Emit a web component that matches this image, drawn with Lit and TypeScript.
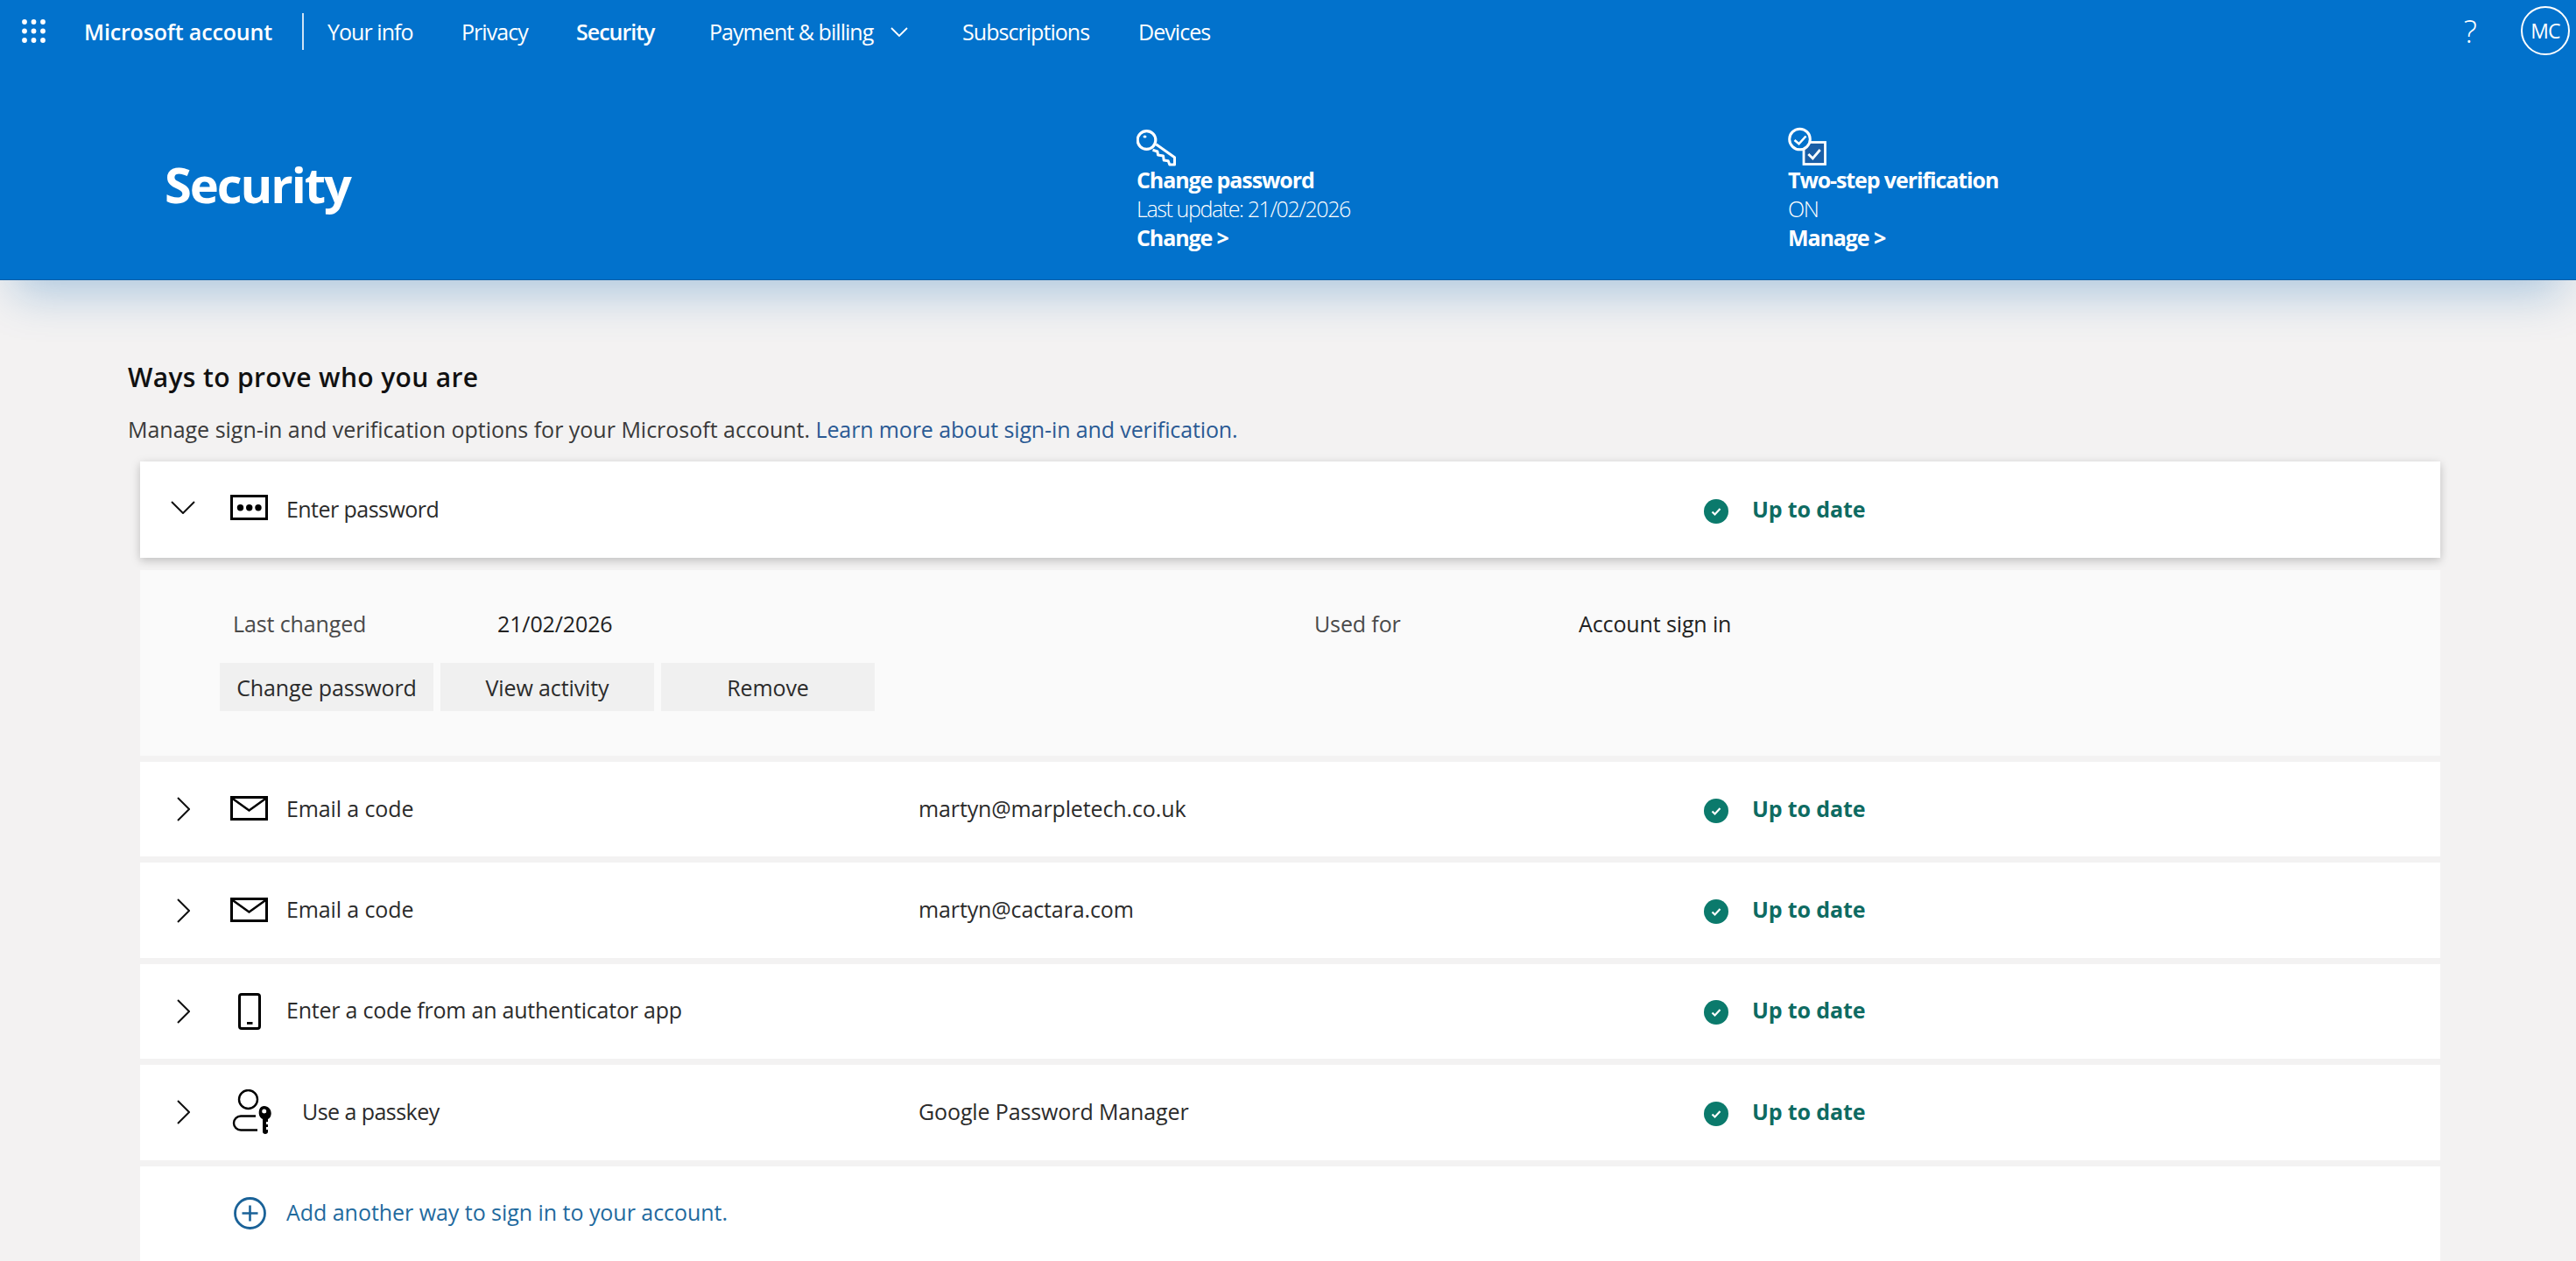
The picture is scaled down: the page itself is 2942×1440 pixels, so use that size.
import {LitElement, html, css, svg} from 'lit';
import {customElement} from 'lit/decorators.js';

const chevronRight = html`<svg class="chev-r" viewBox="0 0 15 28"><path d="M1 1l13 13L1 27" fill="none" stroke="#111" stroke-width="2"/></svg>`;
const chevronDown = html`<svg class="chev-d" viewBox="0 0 28 15"><path d="M1 1l13 13L27 1" fill="none" stroke="#111" stroke-width="2"/></svg>`;

const passwordIcon = html`<svg class="ic-pass" viewBox="0 0 43 29">
  <rect x="1.5" y="1.5" width="40" height="26" fill="none" stroke="#000" stroke-width="3"/>
  <circle cx="11.5" cy="14.7" r="3.7"/><circle cx="21.7" cy="14.7" r="3.7"/><circle cx="32" cy="14.7" r="3.7"/>
</svg>`;
const mailIcon = html`<svg class="ic-mail" viewBox="0 0 43 28">
  <rect x="1.5" y="1.5" width="40" height="25" fill="none" stroke="#000" stroke-width="3"/>
  <path d="M2 2.5l19.5 14L41 2.5" fill="none" stroke="#000" stroke-width="2.6"/>
</svg>`;
const phoneIcon = html`<svg class="ic-phone" viewBox="0 0 26 42">
  <rect x="1.5" y="1.5" width="23" height="39" rx="2.5" fill="none" stroke="#000" stroke-width="3"/>
  <rect x="10" y="33" width="6.5" height="2.8"/>
</svg>`;
const passkeyIcon = html`<svg class="ic-passkey" viewBox="0 0 48 52">
  <circle cx="19.5" cy="11.5" r="10.5" fill="none" stroke="#000" stroke-width="2.4"/>
  <path d="M28 30.5H11a8 8 0 0 0 0 16h19" fill="none" stroke="#000" stroke-width="2.4"/>
  <path fill-rule="evenodd" d="M37.7 19c4.6 0 8 3.6 8 8.4 0 3-1.4 5.2-3.7 6.6v3h-2v3h2v3h-2v3h2v2.5c0 1.6-1.4 2.5-3 2.5s-3-1-3-2.5V34c-2.3-1.4-4.3-3.6-4.3-6.6 0-4.8 1.4-8.4 6-8.4zm0 3.4a2.5 2.5 0 1 0 0 5 2.5 2.5 0 0 0 0-5z"/>
</svg>`;
const plusIcon = html`<svg class="ic-plus" viewBox="0 0 37 37">
  <circle cx="18.5" cy="18.5" r="17" fill="none" stroke="#1a6298" stroke-width="2.8"/>
  <path d="M9.5 18.5h18M18.5 9.5v18" fill="none" stroke="#1a6298" stroke-width="2.6"/>
</svg>`;
const okIcon = html`<svg class="ic-ok" viewBox="0 0 28 28">
  <circle cx="14" cy="14" r="14" fill="#0b7a6c"/>
  <path d="M9.5 14.5l3 3L18.5 11" fill="none" stroke="#fff" stroke-width="2.2"/>
</svg>`;

const dots = [0, 1, 2].flatMap((r) =>
  [0, 1, 2].map((c) => svg`<circle cx=${3 + c * 10.5} cy=${3 + r * 10.5} r="2.9" fill="#fff"/>`)
);

interface Way {
  icon: unknown;
  label: string;
  value?: string;
  cls?: string;
  txt?: string;
}

const ways: Way[] = [
  {icon: mailIcon, label: 'Email a code', value: 'martyn@marpletech.co.uk'},
  {icon: mailIcon, label: 'Email a code', value: 'martyn@cactara.com'},
  {icon: phoneIcon, label: 'Enter a code from an authenticator app', txt: 'snug'},
  {icon: passkeyIcon, label: 'Use a passkey', value: 'Google Password Manager', cls: 'wide', txt: 'tight'},
];

@customElement('app-root')
export class AppRoot extends LitElement {
  static override styles = css`
    :host {
      display: block;
      height: 1440px;
      overflow: hidden;
      background: #f3f2f2;
      font-family: 'Open Sans', 'Noto Sans', sans-serif;
      font-size: 25px;
      letter-spacing: -0.12px;
      color: #2b2b2b;
    }

    .top {
      position: relative;
      height: 320px;
      background: #0272cc;
      color: #fff;
      box-shadow: 0 30px 50px -16px rgba(0, 95, 175, 0.3);
      border-bottom: 1px solid #0b5ea8;
      box-sizing: border-box;
    }

    .nav {
      display: flex;
      align-items: center;
      height: 72px;
      padding-left: 25px;
      letter-spacing: -0.95px;
    }

    .waffle {
      width: 28px;
      height: 28px;
      margin-right: 43px;
    }

    .brand {
      width: 215px;
      font-weight: 600;
      white-space: nowrap;
      letter-spacing: -0.15px;
    }

    .sep {
      width: 2px;
      height: 42px;
      background: #cfe3f5;
      margin: 0 27px 0 34px;
    }

    .nav a {
      white-space: nowrap;
    }

    .nav a.on {
      font-weight: 600;
      letter-spacing: -1px;
    }

    .your-info { width: 153px; }
    .privacy { width: 131px; }
    .security { width: 152px; }
    .payment { width: 207px; }
    .subs { width: 201px; }

    .nav-chev {
      width: 20px;
      height: 11px;
      margin-right: 62px;
    }

    .right {
      margin-left: auto;
      display: flex;
      align-items: center;
      padding-right: 7px;
    }

    .help {
      font-size: 36px;
      font-weight: 300;
      margin-right: 51px;
      margin-top: -2px;
    }

    .avatar {
      width: 56px;
      height: 56px;
      border: 2px solid #fff;
      border-radius: 50%;
      box-sizing: border-box;
      display: flex;
      align-items: center;
      justify-content: center;
      font-size: 23px;
      margin-top: -2px;
    }

    .hero {
      display: grid;
      grid-template-columns: 1111px 744px 1fr;
      padding: 73px 0 0 188px;
    }

    h1 {
      margin: 35px 0 0;
      font-size: 56px;
      line-height: 60px;
      font-weight: 700;
      letter-spacing: -2.05px;
    }

    .tile {
      line-height: 33px;
      letter-spacing: -1.1px;
      margin-left: -1px;
    }

    .tile svg {
      display: block;
      height: 46px;
      width: 46px;
      margin-bottom: -2px;
    }

    .tile b {
      display: block;
      font-weight: 700;
    }

    .tile span {
      display: block;
      font-weight: 300;
      letter-spacing: -1.4px;
    }

    main {
      padding: 91px 155px 0 146px;
    }

    h2 {
      margin: 0;
      font-size: 30px;
      line-height: 40px;
      font-weight: 600;
      color: #111;
      letter-spacing: 0.35px;
    }

    .desc {
      margin: 21px 0 19px;
      line-height: 36px;
      color: #3a3a3a;
      letter-spacing: -0.01px;
    }

    .desc a {
      color: #2a5a94;
      letter-spacing: -0.12px;
    }

    .list {
      margin-left: 14px;
      display: flex;
      flex-direction: column;
      gap: 7px;
    }

    .row {
      display: grid;
      grid-template-columns: 103px 786px 897px 1fr;
      align-items: center;
      height: 108.4px;
      background: #fff;
    }

    .row.open {
      height: 110px;
      box-shadow: 0 3px 10px rgba(0, 0, 0, 0.22);
      margin-bottom: 7px;
    }

    .row.open .expander,
    .row.open .slot {
      margin-top: -5px;
    }

    .expander {
      display: flex;
      justify-content: center;
      width: 100px;
    }

    .expander svg.chev-r {
      margin-left: -2px;
    }

    .chev-r { width: 15px; height: 28px; }
    .chev-d { width: 28px; height: 15px; margin-left: -2px; }

    .name {
      display: flex;
      align-items: center;
    }

    .txt {
      padding-bottom: 3px;
    }

    .txt.tight { letter-spacing: -0.55px; }
    .txt.snug { letter-spacing: -0.22px; }
    .txt.loose { letter-spacing: -0.04px; }

    .slot {
      width: 64px;
      display: flex;
    }

    .slot.wide {
      width: 82px;
    }

    .ic-pass { width: 43px; height: 29px; }
    .ic-mail { width: 43px; height: 28px; margin-top: -2px; }
    .ic-phone { width: 26px; height: 42px; margin-left: 9px; }
    .ic-passkey { width: 48px; height: 52px; margin-left: 1px; }
    .ic-plus { width: 37px; height: 37px; margin-left: 4px; }
    .ic-ok { width: 28px; height: 28px; margin-top: 3px; }

    .status {
      display: flex;
      align-items: center;
      gap: 27px;
      font-weight: 700;
      color: #0e6b62;
    }

    .details {
      height: 212px;
      box-sizing: border-box;
      padding: 43px 0 0 91px;
      background: #fafafa;
    }

    .facts {
      display: grid;
      grid-template-columns: 302px 933px 302px 1fr;
      padding-left: 15px;
      line-height: 36px;
      color: #4a4a4a;
    }

    .facts .v {
      color: #222;
    }

    .btns {
      display: flex;
      gap: 8px;
      margin-top: 27px;
    }

    .btn {
      width: 244px;
      height: 55px;
      display: flex;
      align-items: center;
      justify-content: center;
      background: #f0f0f0;
      white-space: nowrap;
    }

    .add {
      color: #1f6a9e;
    }

    .add-row {
      height: 108px;
    }
  `;

  override render() {
    return html`
      <header class="top">
        <nav class="nav">
          <svg class="waffle" viewBox="0 0 28 28">${dots}</svg>
          <span class="brand">Microsoft account</span>
          <span class="sep"></span>
          <a class="your-info">Your info</a>
          <a class="privacy">Privacy</a>
          <a class="security on">Security</a>
          <a class="payment">Payment &amp; billing</a>
          <svg class="nav-chev" viewBox="0 0 20 11"><path d="M1 1l9 9 9-9" fill="none" stroke="#fff" stroke-width="1.8"/></svg>
          <a class="subs">Subscriptions</a>
          <a>Devices</a>
          <div class="right">
            <span class="help">?</span>
            <span class="avatar">MC</span>
          </div>
        </nav>
        <div class="hero">
          <h1>Security</h1>
          <div class="tile">
            <svg viewBox="0 0 46 46">
              <path d="M22.3 19.7L43.5 34.7V43h-5.7l-1.6-4.3-5-.7-.7-5-6-1-.6-4-5.4-1.7" fill="none" stroke="#fff" stroke-width="3" stroke-linejoin="round"/>
              <circle cx="11.5" cy="15" r="10.3" fill="#0272cc" stroke="#fff" stroke-width="3.2"/>
              <ellipse cx="9.5" cy="11" rx="2" ry="1.6" fill="#fff"/>
            </svg>
            <b>Change password</b>
            <span>Last update: 21/02/2026</span>
            <b>Change &gt;</b>
          </div>
          <div class="tile">
            <svg viewBox="0 0 46 46">
              <rect x="18" y="17.5" width="24.5" height="25" fill="#1a5ea6" stroke="#fff" stroke-width="2.8"/>
              <path d="M23.3 31l5 5 8.4-10" fill="none" stroke="#fff" stroke-width="2.8"/>
              <circle cx="13.5" cy="14" r="11.8" fill="#0272cc" stroke="#fff" stroke-width="3"/>
              <path d="M7.5 15l5 4.3L20.5 10.5" fill="none" stroke="#fff" stroke-width="2.6"/>
            </svg>
            <b>Two-step verification</b>
            <span>ON</span>
            <b>Manage &gt;</b>
          </div>
        </div>
      </header>
      <main>
        <h2>Ways to prove who you are</h2>
        <p class="desc">
          Manage sign-in and verification options for your Microsoft account.
          <a>Learn more about sign-in and verification.</a>
        </p>
        <div class="list">
          <div class="row open">
            <div class="expander">${chevronDown}</div>
            <div class="name"><span class="slot">${passwordIcon}</span><span class="txt tight">Enter password</span></div>
            <div></div>
            <div class="status">${okIcon}<span class="txt">Up to date</span></div>
          </div>
          <div class="details">
            <div class="facts">
              <span>Last changed</span><span class="v">21/02/2026</span>
              <span>Used for</span><span class="v">Account sign in</span>
            </div>
            <div class="btns">
              <span class="btn">Change password</span>
              <span class="btn">View activity</span>
              <span class="btn">Remove</span>
            </div>
          </div>
          ${ways.map(
            (w) => html`
              <div class="row">
                <div class="expander">${chevronRight}</div>
                <div class="name"><span class="slot ${w.cls ?? ''}">${w.icon}</span><span class="txt ${w.txt ?? ''}">${w.label}</span></div>
                <div class="txt">${w.value ?? ''}</div>
                <div class="status">${okIcon}<span class="txt">Up to date</span></div>
              </div>
            `
          )}
          <div class="row add-row">
            <div></div>
            <div class="name add"><span class="slot">${plusIcon}</span><span class="txt loose">Add another way to sign in to your account.</span></div>
          </div>
        </div>
      </main>
    `;
  }
}

declare global {
  interface HTMLElementTagNameMap {
    'app-root': AppRoot;
  }
}
